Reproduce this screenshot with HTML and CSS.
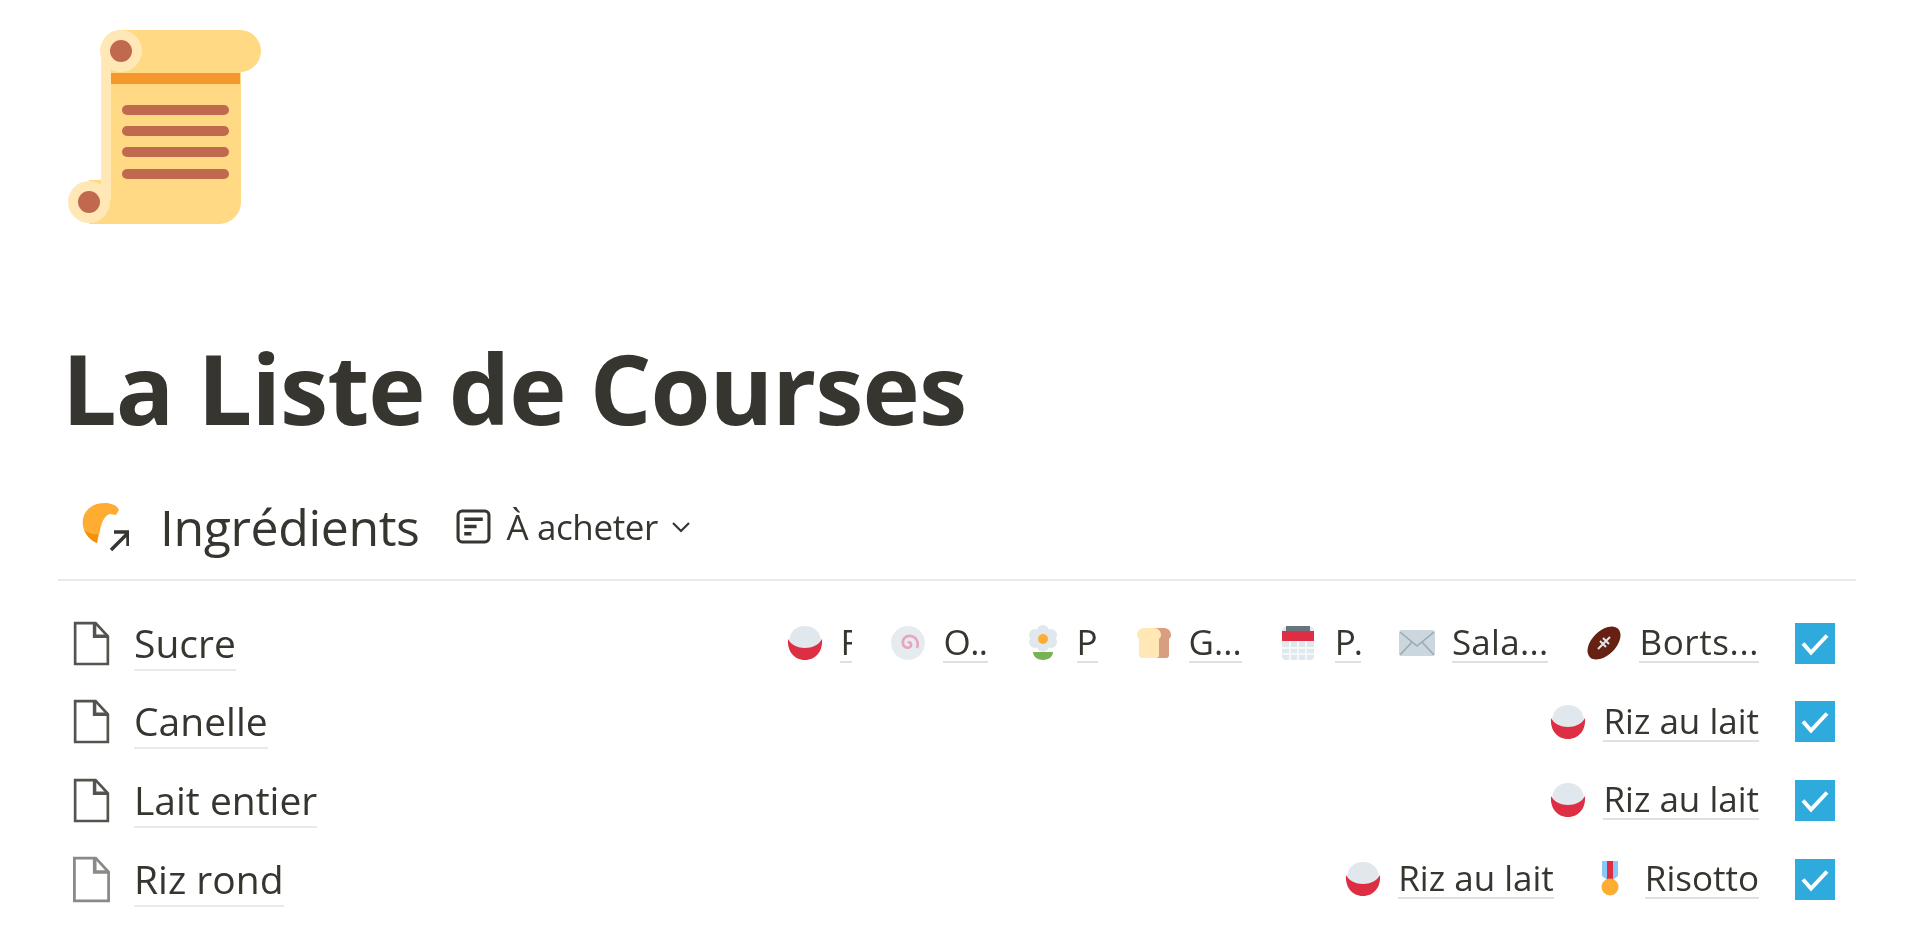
FILE: index.html
```html
<!DOCTYPE html>
<html lang="fr">
<head>
    <meta charset="UTF-8">
    <title>La Liste de Courses</title>
    <link rel="stylesheet" href="styles.css">
</head>
<body>
    <svg class="defs" width="0" height="0">
        <symbol id="bowl" viewBox="0 0 36 36">
            <path fill="#e1e8ed" d="M2 17C2 7 9 1 18 1s16 6 16 16v6H2z"/>
            <path fill="#dd2e44" d="M1 14c3 6 10 9 17 9s14-3 17-9c1 12-6 21-17 21S0 26 1 14z"/>
        </symbol>
        <symbol id="page" viewBox="0 0 36 44">
            <path fill="none" stroke="currentColor" stroke-width="2.6" d="M2 2h20l12 13v27H2z"/>
            <path fill="none" stroke="currentColor" stroke-width="3.4" d="M21 2v13h13"/>
        </symbol>
    </svg>

    <div class="container">
        <svg class="page-icon" viewBox="0 0 194 194">
            <path fill="#ffd983" d="M53 0h119a21 21 0 0 1 0 42h1v130a22 22 0 0 1-22 22H21v-44h12V20A20 20 0 0 1 53 0z"/>
            <rect fill="#f4982e" x="43" y="43" width="129" height="11"/>
            <rect fill="#ffe8b6" x="33" y="20" width="10" height="150"/>
            <circle fill="#ffe8b6" cx="53" cy="21" r="21"/>
            <circle fill="#c1694f" cx="53" cy="21" r="11"/>
            <circle fill="#ffe8b6" cx="21" cy="172" r="21"/>
            <circle fill="#c1694f" cx="21" cy="172" r="11"/>
            <g fill="#c1694f">
                <rect x="54" y="75" width="107" height="10" rx="5"/>
                <rect x="54" y="96" width="107" height="10" rx="5"/>
                <rect x="54" y="117" width="107" height="10" rx="5"/>
                <rect x="54" y="139" width="107" height="10" rx="5"/>
            </g>
        </svg>

        <h1>La Liste de Courses</h1>

        <div class="view-header">
            <svg class="db-icon" viewBox="0 0 50 50">
                <path fill="#ffac33" d="M4 24C2 10 12 1 26 1c6 0 12 2 14 7l-3 5-6-1c-4 1-7 5-9 12l-4 17C11 38 6 32 4 24z"/>
                <path fill="#f4900c" d="M18 41c-6-2-11-8-13-13 4 3 9 5 14 4z"/>
                <path fill="none" stroke="#37352f" stroke-width="3.4" d="M32 48l17-17M35 30h14v14"/>
            </svg>
            <span class="db-name">Ingrédients</span>
            <svg class="view-icon" viewBox="0 0 34 34">
                <rect fill="none" stroke="#37352f" stroke-width="3" x="2" y="2" width="30" height="30" rx="4"/>
                <path fill="none" stroke="#37352f" stroke-width="3.4" d="M8 10h18M8 17h12M8 24h7"/>
            </svg>
            <span class="view-name">À acheter</span>
            <svg class="chevron" viewBox="0 0 20 12">
                <path fill="none" stroke="#37352f" stroke-width="2.2" d="M2 2l8 8 8-8"/>
            </svg>
        </div>

        <div class="list">
            <div class="row">
                <svg class="doc"><use href="#page"/></svg>
                <span class="title">Sucre</span>
                <div class="tags">
                    <span class="tag">
                        <svg class="emoji"><use href="#bowl"/></svg>
                        <span class="tag-name w-r">Riz au lait</span>
                    </span>
                    <span class="tag">
                        <svg class="emoji" viewBox="0 0 36 36">
                            <circle fill="#e6ebf0" cx="18" cy="18" r="17"/>
                            <path fill="none" stroke="#e8a6bd" stroke-width="2.6" d="M18 18c2-2 4 1 3 3-2 3-7 2-8-2-1-5 3-9 8-8 6 1 8 7 6 12"/>
                        </svg>
                        <span class="tag-name w-o">O..</span>
                    </span>
                    <span class="tag">
                        <svg class="emoji flower" viewBox="0 0 34 36">
                            <g fill="#e1e8ed">
                                <circle cx="17" cy="6" r="6"/>
                                <circle cx="17" cy="21" r="6"/>
                                <circle cx="9" cy="10" r="6"/>
                                <circle cx="25" cy="10" r="6"/>
                                <circle cx="9" cy="17" r="6"/>
                                <circle cx="25" cy="17" r="6"/>
                            </g>
                            <circle fill="#ffac33" cx="17" cy="14" r="5"/>
                            <path fill="#77b255" d="M7 27h20c0 5-5 8-10 8S7 32 7 27z"/>
                        </svg>
                        <span class="tag-name">P</span>
                    </span>
                    <span class="tag">
                        <svg class="emoji" viewBox="0 0 36 36">
                            <path fill="#d99e82" d="M14 3h14c4 0 7 3 7 7 0 2-1 3-2 4v16c0 2-1 3-3 3H14z"/>
                            <path fill="#ffe8b6" d="M8 3h10c4 0 7 3 7 7 0 2-1 3-2 4v16c0 2-1 3-3 3H6c-2 0-3-1-3-3V14c-1-1-2-2-2-4 0-4 3-7 7-7z"/>
                        </svg>
                        <span class="tag-name">G...</span>
                    </span>
                    <span class="tag">
                        <svg class="emoji emoji-cal" viewBox="0 0 36 36">
                            <rect fill="#e1e8ed" x="2" y="2" width="32" height="33" rx="4"/>
                            <rect fill="#dd2e44" x="2" y="6" width="32" height="10"/>
                            <path fill="#66757f" d="M6 1h24v5H6z"/>
                            <path stroke="#f5f8fa" stroke-width="2" d="M10 16v19M18 16v19M26 16v19M2 23h32M2 29h32"/>
                        </svg>
                        <span class="tag-name tight">P.</span>
                    </span>
                    <span class="tag">
                        <svg class="emoji" viewBox="0 0 36 28">
                            <rect fill="#ccd6dd" x="0" y="1" width="36" height="26" rx="3"/>
                            <path fill="none" stroke="#99aab5" stroke-width="1.6" d="M1 3l17 14L35 3M1 26l12-13M35 26L23 13"/>
                        </svg>
                        <span class="tag-name w-s">Sala...</span>
                    </span>
                    <span class="tag">
                        <svg class="emoji" viewBox="0 0 36 36">
                            <ellipse fill="#662113" cx="18" cy="18" rx="20" ry="12" transform="rotate(-45 18 18)"/>
                            <path stroke="#e1e8ed" stroke-width="2" d="M12 24l12-12M14 16l6 6M17 13l6 6"/>
                        </svg>
                        <span class="tag-name w-b">Borts...</span>
                    </span>
                </div>
                <span class="check"><svg viewBox="0 0 40 40"><path fill="none" stroke="#fff" stroke-width="4" d="M8 20l8 9 16-17"/></svg></span>
            </div>

            <div class="row">
                <svg class="doc"><use href="#page"/></svg>
                <span class="title">Canelle</span>
                <div class="tags">
                    <span class="tag">
                        <svg class="emoji"><use href="#bowl"/></svg>
                        <span class="tag-name">Riz au lait</span>
                    </span>
                </div>
                <span class="check"><svg viewBox="0 0 40 40"><path fill="none" stroke="#fff" stroke-width="4" d="M8 20l8 9 16-17"/></svg></span>
            </div>

            <div class="row">
                <svg class="doc"><use href="#page"/></svg>
                <span class="title">Lait entier</span>
                <div class="tags">
                    <span class="tag">
                        <svg class="emoji"><use href="#bowl"/></svg>
                        <span class="tag-name">Riz au lait</span>
                    </span>
                </div>
                <span class="check"><svg viewBox="0 0 40 40"><path fill="none" stroke="#fff" stroke-width="4" d="M8 20l8 9 16-17"/></svg></span>
            </div>

            <div class="row">
                <svg class="doc doc-faded"><use href="#page"/></svg>
                <span class="title">Riz rond</span>
                <div class="tags">
                    <span class="tag">
                        <svg class="emoji"><use href="#bowl"/></svg>
                        <span class="tag-name">Riz au lait</span>
                    </span>
                    <span class="tag">
                        <svg class="emoji" viewBox="0 0 20 36">
                            <path fill="#88c9f9" d="M2 0h16v15l-8 6-8-6z"/>
                            <path fill="#dd2e44" d="M7 0h6v18H7z"/>
                            <circle fill="#ffac33" cx="10" cy="26" r="8.5"/>
                        </svg>
                        <span class="tag-name">Risotto</span>
                    </span>
                </div>
                <span class="check"><svg viewBox="0 0 40 40"><path fill="none" stroke="#fff" stroke-width="4" d="M8 20l8 9 16-17"/></svg></span>
            </div>
        </div>
    </div>
</body>
</html>
```

FILE: styles.css
```css
html, body {
    height: 100%;
    overflow: hidden;
}
body {
    font-family: "Open Sans", "Noto Sans", sans-serif;
    background-color: #fff;
    color: #37352f;
    margin: 0;
    padding: 0;
}
.defs {
    display: block;
    height: 0;
}
/* the whole capture is slightly soft */
.container {
    padding: 30px 53px 0 58px;
    filter: blur(0.5px);
}
.page-icon {
    display: block;
    width: 194px;
    height: 194px;
    margin-left: 10px;
}
h1 {
    font-size: 97px;
    line-height: 120px;
    font-weight: 700;
    letter-spacing: -1px;
    margin: 103px 0 0 4px;
}
.view-header {
    display: flex;
    align-items: center;
    height: 73px;
    margin-top: 43px;
    padding: 0 0 16px 21px;
}
.db-icon {
    width: 50px;
    height: 50px;
    margin-right: 31px;
}
.db-name {
    font-size: 50px;
    letter-spacing: -0.4px;
    margin-right: 36px;
}
.view-icon {
    width: 35px;
    height: 35px;
    margin-right: 16px;
}
.view-name {
    font-size: 35px;
    letter-spacing: -0.4px;
    margin-right: 13px;
}
.chevron {
    width: 20px;
    height: 12px;
}
.list {
    border-top: 2px solid #e9e9e7;
    padding-top: 23px;
}
.row {
    display: flex;
    align-items: center;
    height: 78.6px;
    padding: 0 21px 0 15px;
}
.doc {
    width: 37px;
    height: 45px;
    margin-right: 24px;
    color: #55534e;
    flex: none;
}
.doc-faded {
    width: 39px;
    height: 47px;
    margin-left: -1px;
    margin-right: 23px;
    color: #8b8a86;
}
.title {
    font-size: 39px;
    line-height: 53px;
    border-bottom: 2px solid #e9e9e7;
}
.tags {
    display: flex;
    align-items: center;
    justify-content: flex-end;
    gap: 38px;
    flex: 1;
    margin-right: 36px;
}
.tag {
    display: flex;
    align-items: center;
    gap: 17px;
}
.emoji {
    width: 36px;
    height: 36px;
    flex: none;
}
.emoji-cal {
    margin-right: 2px;
}
.flower {
    width: 34px;
}
.tag-name {
    font-size: 35px;
    line-height: 38px;
    border-bottom: 2px solid #e0e0de;
    white-space: nowrap;
}
.w-r {
    width: 12px;
    overflow: hidden;
}
.w-o {
    letter-spacing: -0.5px;
}
.w-s {
    letter-spacing: 0.3px;
}
.w-b {
    letter-spacing: 0.6px;
}
.tight {
    letter-spacing: -2px;
}
.check {
    display: block;
    width: 40px;
    height: 41px;
    background-color: #2eaadc;
    flex: none;
}
.check svg {
    display: block;
    width: 40px;
    height: 41px;
}
```
